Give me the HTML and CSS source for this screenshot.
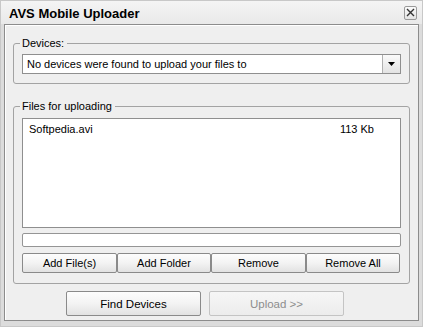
FILE: index.html
```html
<!DOCTYPE html>
<html>
<head>
<meta charset="utf-8">
<link rel="stylesheet" href="styles.css">
</head>
<body>
<div class="window">
  <div class="titlebar">
    <span class="title">AVS Mobile Uploader</span>
    <span class="close"><svg width="9" height="9" viewBox="0 0 9 9"><path d="M1 1 L8 8 M8 1 L1 8" stroke="#333" stroke-width="1.4"/></svg></span>
  </div>
  <div class="panel">
    <div class="group devices">
      <span class="group-label">Devices:</span>
      <div class="select">
        <span class="select-text">No devices were found to upload your files to</span>
        <span class="drop"><svg width="7" height="4" viewBox="0 0 7 4"><path d="M0 0 H7 L3.5 4 Z" fill="#000"/></svg></span>
      </div>
    </div>
    <div class="group files">
      <span class="group-label">Files for uploading</span>
      <div class="list">
        <div class="row"><span class="name">Softpedia.avi</span><span class="size">113 Kb</span></div>
      </div>
      <div class="progress"></div>
      <div class="btn-row">
        <button class="btn">Add File(s)</button>
        <button class="btn">Add Folder</button>
        <button class="btn">Remove</button>
        <button class="btn">Remove All</button>
      </div>
    </div>
    <div class="actions">
      <button class="btn big">Find Devices</button>
      <button class="btn big disabled">Upload &gt;&gt;</button>
    </div>
  </div>
</div>
</body>
</html>
```
FILE: styles.css
```css
* { box-sizing: border-box; }
html, body { margin: 0; padding: 0; }
body {
  width: 423px;
  height: 327px;
  overflow: hidden;
  font-family: "Liberation Sans", Arial, sans-serif;
  font-size: 11px;
  color: #000;
}
.window {
  width: 423px;
  height: 327px;
  background: #dcdcdc;
  border: 1px solid #c8c8c8;
  padding: 0 3px 5px 3px;
  display: flex;
  flex-direction: column;
}
.titlebar {
  height: 23px;
  margin: 0 -3px;
  background: linear-gradient(#f4f4f4, #e9e9e9);
  display: flex;
  align-items: center;
  justify-content: space-between;
  padding: 0 5px 0 8px;
}
.title {
  font-weight: bold;
  font-size: 13px;
  color: #000;
  padding-top: 1px;
}
.close {
  width: 13px;
  height: 14px;
  border: 1px solid #9a9a9a;
  border-radius: 2px;
  background: linear-gradient(#fbfbfb, #e4e4e4);
  display: flex;
  align-items: center;
  justify-content: center;
}
.panel {
  flex: 1;
  background: #efefef;
  border: 1px solid #8c8c8c;
  box-shadow: inset 1px 1px 0 #ffffff;
  padding: 18px 8px 0 8px;
  display: flex;
  flex-direction: column;
}
.group {
  position: relative;
  border: 1px solid #a3a3a3;
  border-radius: 3px;
  padding: 10px 8px 9px 8px;
}
.group-label {
  position: absolute;
  top: -8px;
  left: 6px;
  padding: 0 3px 0 2px;
  background: #efefef;
  line-height: 14px;
}
.select {
  height: 20px;
  background: #fff;
  border: 1px solid #8f8f8f;
  display: flex;
  align-items: center;
}
.select-text {
  flex: 1;
  padding-left: 4px;
  line-height: 18px;
}
.drop {
  width: 18px;
  height: 18px;
  border-left: 1px solid #b0b0b0;
  background: linear-gradient(#fafafa, #e3e3e3);
  display: flex;
  align-items: center;
  justify-content: center;
}
.files {
  margin-top: 22px;
  padding: 11px 8px 10px 8px;
}
.list {
  height: 110px;
  background: #fff;
  border: 1px solid #8f8f8f;
  padding: 3px 0 0 6px;
}
.row {
  display: flex;
  justify-content: space-between;
  line-height: 15px;
}
.size { margin-right: 26px; }
.progress {
  margin-top: 5px;
  height: 14px;
  background: #fff;
  border: 1px solid #959595;
  border-radius: 2px;
}
.btn-row {
  margin-top: 6px;
  display: grid;
  grid-template-columns: 95px 94px 95px 94px;
  gap: 0;
}
.btn {
  font-family: inherit;
  font-size: 11px;
  color: #000;
  height: 20px;
  margin: 0;
  padding: 0;
  border: 1px solid #8a8a8a;
  border-radius: 2px;
  background: linear-gradient(#fdfdfd, #f3f3f3 50%, #e2e2e2);
}
.actions {
  margin-top: 7px;
  display: flex;
  gap: 8px;
  padding-left: 53px;
}
.btn.big {
  width: 135px;
  height: 25px;
  font-size: 11.5px;
}
.btn.disabled {
  color: #8d8d8d;
  border-color: #c4c4c4;
  background: linear-gradient(#f6f6f6, #ececec);
}
```
